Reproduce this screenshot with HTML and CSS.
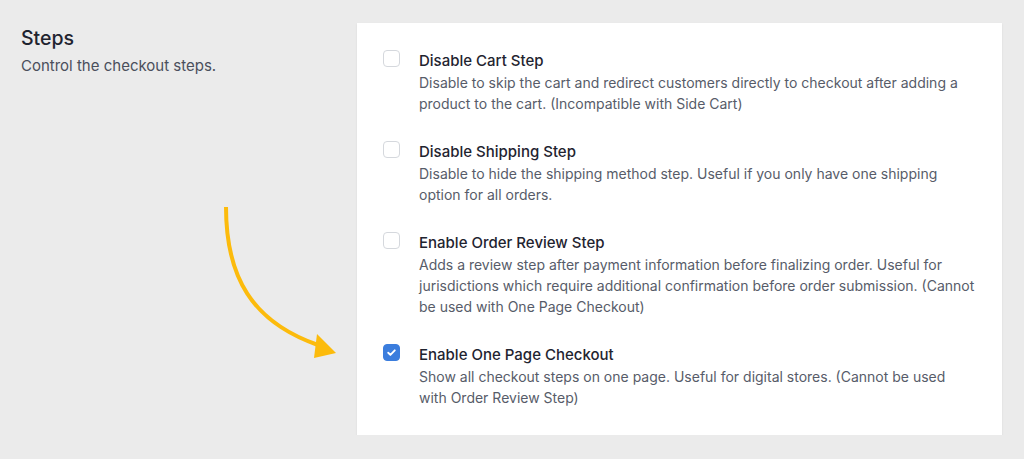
FILE: index.html
```html
<!DOCTYPE html>
<html lang="en">
<head>
    <meta charset="UTF-8">
    <meta name="viewport" content="width=device-width, initial-scale=1.0">
    <title>Checkout Steps</title>
    <link rel="stylesheet" href="styles.css">
</head>
<body>
<div class="settings">
    <div class="section-info">
        <h2 class="section-title">Steps</h2>
        <p class="section-desc">Control the checkout steps.</p>
    </div>

    <div class="card">
        <label class="option">
            <input type="checkbox" name="disable-cart">
            <div class="option-text">
                <span class="option-title">Disable Cart Step</span>
                <span class="option-desc">Disable to skip the cart and redirect customers directly to checkout after adding a product to the cart. (Incompatible with Side Cart)</span>
            </div>
        </label>
        <label class="option">
            <input type="checkbox" name="disable-shipping">
            <div class="option-text">
                <span class="option-title">Disable Shipping Step</span>
                <span class="option-desc">Disable to hide the shipping method step. Useful if you only have one shipping option for all orders.</span>
            </div>
        </label>
        <label class="option">
            <input type="checkbox" name="order-review">
            <div class="option-text">
                <span class="option-title">Enable Order Review Step</span>
                <span class="option-desc">Adds a review step after payment information before finalizing order. Useful for jurisdictions which require additional confirmation before order submission. (Cannot be used with One Page Checkout)</span>
            </div>
        </label>
        <label class="option">
            <input type="checkbox" name="one-page" checked>
            <div class="option-text">
                <span class="option-title">Enable One Page Checkout</span>
                <span class="option-desc">Show all checkout steps on one page. Useful for digital stores. (Cannot be used with Order Review Step)</span>
            </div>
        </label>
    </div>

    <!-- yellow pointer arrow -->
    <svg class="arrow" width="130" height="160" viewBox="0 0 130 160">
        <path d="M4 0 C 4 70, 30 115, 96 138" fill="none" stroke="#fcbb0c" stroke-width="4" stroke-linecap="round"/>
        <polygon points="95,127 114,146 92,151" fill="#fcbb0c"/>
    </svg>
</div>
</body>
</html>
```

FILE: styles.css
```css
body {
    font-family: Inter, "Noto Sans", sans-serif;
    margin: 0;
    padding: 0;
    background-color: #ebebeb;
    color: #1f2430;
}

.settings {
    position: relative;
    display: flex;
    padding: 23px 22px 0 21px;
}

.section-info {
    width: 336px;
}

.section-title {
    font-size: 19.5px;
    font-weight: 500;
    margin: 3px 0 6px;
    line-height: 24px;
}

.section-desc {
    font-size: 15px;
    color: #4a4f5c;
    margin: 0;
    line-height: 20px;
}

.card {
    flex: 1;
    background-color: #fff;
    box-shadow: 0 1px 2px rgba(0, 0, 0, 0.08);
    padding: 27px 27px 27px 26px;
    display: flex;
    flex-direction: column;
    gap: 27px;
}

.option {
    display: flex;
    gap: 19px;
    cursor: pointer;
}

.option input[type="checkbox"] {
    appearance: none;
    flex: none;
    width: 17px;
    height: 17px;
    margin: 0;
    border: 1px solid #d5d8dd;
    border-radius: 4px;
    background-color: #fff;
}

.option input[type="checkbox"]:checked {
    background-color: #3b7ddd;
    border-color: #3b7ddd;
    background-image: url("data:image/svg+xml;utf8,<svg xmlns='http://www.w3.org/2000/svg' viewBox='0 0 16 16'><path d='M4.5 8.3l2.3 2.3 4.7-4.9' fill='none' stroke='white' stroke-width='2' stroke-linecap='round' stroke-linejoin='round'/></svg>");
    background-size: 100% 100%;
}

.option-text {
    display: flex;
    flex-direction: column;
}

.option-title {
    font-size: 15px;
    font-weight: 500;
    line-height: 22px;
}

.option-desc {
    font-size: 14px;
    line-height: 21px;
    color: #575c69;
}

.arrow {
    position: absolute;
    left: 222px;
    top: 207px;
}
```
